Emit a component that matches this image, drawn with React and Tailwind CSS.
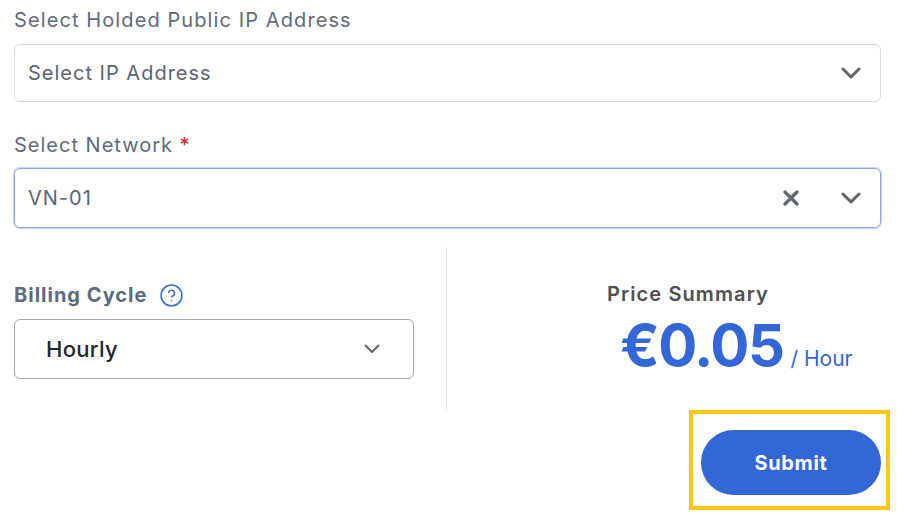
import { CircleHelp } from "lucide-react";

const FONT = { fontFamily: "Inter, 'Noto Sans', sans-serif" };

function Chevron({ className = "", thin = false }) {
  return thin ? (
    <svg width="16" height="10" viewBox="0 0 16 10" className={className} aria-hidden="true">
      <polyline points="1.5,1.5 8,8 14.5,1.5" fill="none" stroke="#5f6670" strokeWidth="2" strokeLinecap="round" strokeLinejoin="round" />
    </svg>
  ) : (
    <svg width="20" height="12" viewBox="0 0 20 12" className={className} aria-hidden="true">
      <polyline points="2,2 10,10 18,2" fill="none" stroke="#5f6670" strokeWidth="3" strokeLinecap="round" strokeLinejoin="round" />
    </svg>
  );
}

function ClearIcon() {
  return (
    <svg width="16" height="16" viewBox="0 0 16 16" aria-hidden="true">
      <path d="M2 2 L14 14 M14 2 L2 14" fill="none" stroke="#5f6670" strokeWidth="3.2" strokeLinecap="round" />
    </svg>
  );
}

export default function App() {
  return (
    <div className="min-h-[518px] w-[919px] bg-white" style={FONT}>
      <div className="flex w-[881px] flex-col pl-[14px] pt-[6px]">
        <label className="block h-[28px] text-[20px] leading-[28px] tracking-[1.1px] text-[#5f6b7c]">
          Select Holded Public IP Address
        </label>
        <div className="mt-[10px] flex h-[58px] items-center rounded-md border border-[#d6d9de] pl-[13px] pr-[19px]">
          <span className="flex-1 text-[20px] tracking-[1px] text-[#5b6573]">Select IP Address</span>
          <Chevron />
        </div>

        <label className="mt-[29px] block h-[28px] text-[20px] leading-[28px] tracking-[1px] text-[#5f6b7c]">
          Select Network <span className="text-[#e11d1d]">*</span>
        </label>
        <div className="mt-[9px] flex h-[60px] items-center rounded-md border border-[#86a8e8] pl-[13px] pr-[19px] shadow-[0_0_0_1px_#c9d8f5]">
          <span className="flex-1 text-[20px] tracking-[1px] text-[#5b6573]">VN-01</span>
          <span className="mr-[42px] flex">
            <ClearIcon />
          </span>
          <Chevron />
        </div>

        <div className="mt-[19px] flex">
          <div className="w-[433px] border-r border-[#e3e5e8] pb-[31px] pt-[34px]">
            <div className="flex h-[28px] items-center gap-[12px]">
              <span className="text-[20px] font-bold tracking-[1px] text-[#5c6b7f]">Billing Cycle</span>
              <CircleHelp size={25} strokeWidth={1.5} color="#3b6fd8" />
            </div>
            <div className="mt-[10px] flex h-[60px] w-[400px] items-center rounded-md border border-[#a3a7ad] pl-[31px] pr-[33px]">
              <span className="flex-1 text-[22px] font-medium tracking-[0.3px] text-[#1f2733]">Hourly</span>
              <Chevron thin />
            </div>
          </div>
          <div className="flex flex-1 flex-col items-start">
            <div className="ml-[160px] mt-[33px] h-[28px] text-[20px] font-semibold leading-[28px] tracking-[1.1px] text-[#4f4f4f]">
              Price Summary
            </div>
            <div className="ml-[173px] mt-[8px] flex items-baseline gap-[7px]">
              <span className="text-[58px] font-bold leading-none tracking-[-1.5px] text-[#3366d6]">€0.05</span>
              <span className="text-[21px] text-[#3366d6]">/ Hour</span>
            </div>
          </div>
        </div>

        <div className="-mr-[9px] self-end border-4 border-[#fdc60f] pb-[11px] pl-[8px] pr-[5px] pt-[16px]">
          <button
            type="button"
            className="flex h-[65px] w-[180px] items-center justify-center rounded-full bg-[#3366d6] text-[20px] font-bold tracking-[0.6px] text-white"
          >
            Submit
          </button>
        </div>
      </div>
    </div>
  );
}
